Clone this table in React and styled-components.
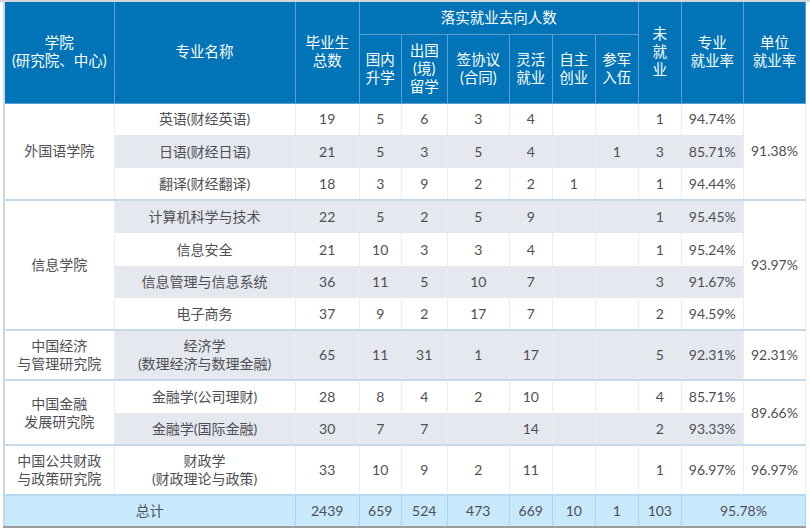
import React from "react";
import styled, { createGlobalStyle } from "styled-components";

const Global = createGlobalStyle`
  html, body { margin: 0; padding: 0; background: #ffffff; }
  body { font-family: Lato, "Noto Sans CJK SC", sans-serif; }
`;

const Frame = styled.div`
  width: 810px;
  height: 530px;
  box-sizing: border-box;
  border-top: 2px solid #d5d5d5;
  padding-left: 3px;
  overflow: hidden;
`;

const Table = styled.table`
  width: 803px;
  border-collapse: collapse;
  table-layout: fixed;
  border-left: 2px solid #cfd6de;
  border-bottom: 2px solid #9c9c9c;
  font-size: 14px;
  color: #4f4f55;
`;

const HeadCell = styled.th`
  background: #0174b8;
  color: #ffffff;
  font-weight: 400;
  font-size: 14.5px;
  line-height: 18px;
  text-align: center;
  vertical-align: middle;
  padding: 0;
  border: 1px solid #5c9fd2;
  border-top: none;
`;

const HeadRow = styled.tr`
  height: ${(p) => p.$h}px;
`;

const BodyRow = styled.tr`
  height: ${(p) => p.$h}px;
  background: ${(p) => (p.$shade ? "#e5e8ef" : "#ffffff")};
  & > td {
    border-top: ${(p) => (p.$groupStart ? "2px solid #c4d9ea" : "none")};
  }
`;

const Cell = styled.td`
  padding: 0;
  text-align: center;
  vertical-align: middle;
  line-height: 18px;
  border-left: 1px solid #ecedf1;
  border-right: 1px solid #ecedf1;
`;

const GroupCell = styled(Cell)`
  background: #ffffff;
`;

const TotalRow = styled.tr`
  height: 32px;
  background: #c8e8fc;
  & > td {
    border-top: 2px solid #b6d9f0;
    border-left: 1px solid #a8d4f2;
    border-right: 1px solid #a8d4f2;
  }
`;

const groups = [
  {
    name: ["外国语学院"],
    rate: "91.38%",
    rows: [
      [["英语(财经英语)"], 19, 5, 6, 3, 4, "", "", 1, "94.74%"],
      [["日语(财经日语)"], 21, 5, 3, 5, 4, "", 1, 3, "85.71%"],
      [["翻译(财经翻译)"], 18, 3, 9, 2, 2, 1, "", 1, "94.44%"],
    ],
  },
  {
    name: ["信息学院"],
    rate: "93.97%",
    rows: [
      [["计算机科学与技术"], 22, 5, 2, 5, 9, "", "", 1, "95.45%"],
      [["信息安全"], 21, 10, 3, 3, 4, "", "", 1, "95.24%"],
      [["信息管理与信息系统"], 36, 11, 5, 10, 7, "", "", 3, "91.67%"],
      [["电子商务"], 37, 9, 2, 17, 7, "", "", 2, "94.59%"],
    ],
  },
  {
    name: ["中国经济", "与管理研究院"],
    rate: "92.31%",
    tall: true,
    rows: [
      [["经济学", "(数理经济与数理金融)"], 65, 11, 31, 1, 17, "", "", 5, "92.31%"],
    ],
  },
  {
    name: ["中国金融", "发展研究院"],
    rate: "89.66%",
    rows: [
      [["金融学(公司理财)"], 28, 8, 4, 2, 10, "", "", 4, "85.71%"],
      [["金融学(国际金融)"], 30, 7, 7, "", 14, "", "", 2, "93.33%"],
    ],
  },
  {
    name: ["中国公共财政", "与政策研究院"],
    rate: "96.97%",
    tall: true,
    rows: [
      [["财政学", "(财政理论与政策)"], 33, 10, 9, 2, 11, "", "", 1, "96.97%"],
    ],
  },
];

const rowHeights = [32, 33, 32, 33, 33, 32, 32, 50, 33, 32, 50];

const Lines = ({ lines }) =>
  lines.map((l, i) => (
    <React.Fragment key={i}>
      {i > 0 && <br />}
      {l}
    </React.Fragment>
  ));

const widths = [110, 181, 64, 42, 46, 62, 43, 43, 43, 43, 62, 62];

export default function App() {
  let idx = 0;
  return (
    <>
      <Global />
      <Frame>
        <Table>
          <colgroup>
            {widths.map((w, i) => (
              <col key={i} style={{ width: w }} />
            ))}
          </colgroup>
          <thead>
            <HeadRow $h={32}>
              <HeadCell rowSpan={2}>
                学院
                <br />
                (研究院、中心)
              </HeadCell>
              <HeadCell rowSpan={2}>专业名称</HeadCell>
              <HeadCell rowSpan={2}>
                毕业生
                <br />
                总数
              </HeadCell>
              <HeadCell colSpan={6}>落实就业去向人数</HeadCell>
              <HeadCell rowSpan={2}>
                未<br />就<br />业
              </HeadCell>
              <HeadCell rowSpan={2}>
                专业
                <br />
                就业率
              </HeadCell>
              <HeadCell rowSpan={2}>
                单位
                <br />
                就业率
              </HeadCell>
            </HeadRow>
            <HeadRow $h={69}>
              <HeadCell>
                国内
                <br />
                升学
              </HeadCell>
              <HeadCell>
                出国
                <br />
                (境)
                <br />
                留学
              </HeadCell>
              <HeadCell>
                签协议
                <br />
                (合同)
              </HeadCell>
              <HeadCell>
                灵活
                <br />
                就业
              </HeadCell>
              <HeadCell>
                自主
                <br />
                创业
              </HeadCell>
              <HeadCell>
                参军
                <br />
                入伍
              </HeadCell>
            </HeadRow>
          </thead>
          <tbody>
            {groups.map((g, gi) =>
              g.rows.map((r, ri) => {
                const i = idx++;
                const [major, ...vals] = r;
                return (
                  <BodyRow
                    key={`${gi}-${ri}`}
                    $h={rowHeights[i]}
                    $shade={i % 2 === 1 || g.tall && gi === 2}
                    $groupStart={ri === 0 && gi > 0}
                  >
                    {ri === 0 && (
                      <GroupCell rowSpan={g.rows.length}>
                        <Lines lines={g.name} />
                      </GroupCell>
                    )}
                    <Cell>
                      <Lines lines={major} />
                    </Cell>
                    {vals.map((v, vi) => (
                      <Cell key={vi}>{v}</Cell>
                    ))}
                    {ri === 0 && (
                      <GroupCell rowSpan={g.rows.length}>{g.rate}</GroupCell>
                    )}
                  </BodyRow>
                );
              })
            )}
            <TotalRow>
              <Cell colSpan={2}>总计</Cell>
              <Cell>2439</Cell>
              <Cell>659</Cell>
              <Cell>524</Cell>
              <Cell>473</Cell>
              <Cell>669</Cell>
              <Cell>10</Cell>
              <Cell>1</Cell>
              <Cell>103</Cell>
              <Cell colSpan={2}>95.78%</Cell>
            </TotalRow>
          </tbody>
        </Table>
      </Frame>
    </>
  );
}
